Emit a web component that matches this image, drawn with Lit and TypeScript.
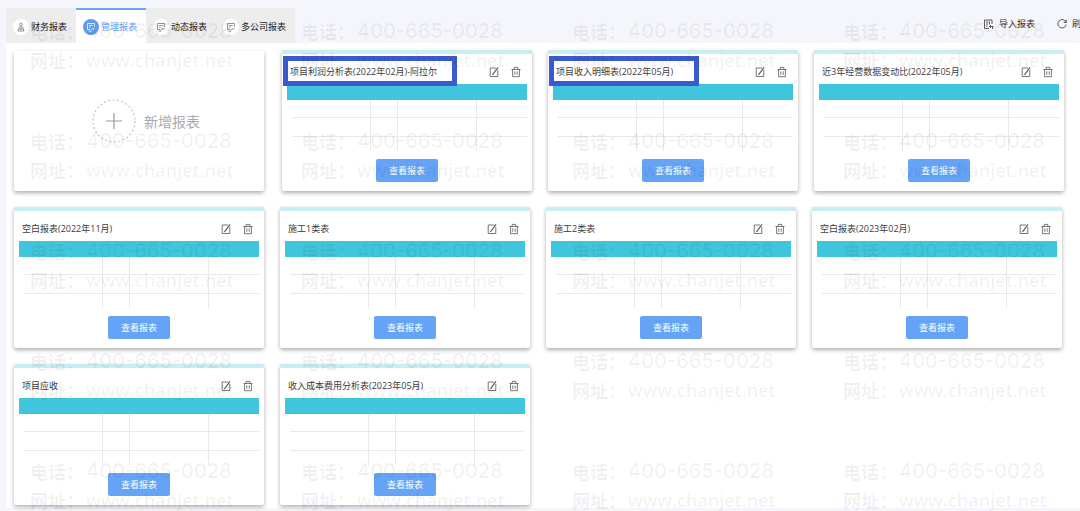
import { LitElement, html, css, svg, nothing } from "lit";
import { customElement, property, state } from "lit/decorators.js";
import { classMap } from "lit/directives/class-map.js";

interface Report {
  title: string;
  /** Width in pixels of the marker frame round the title. */
  mark?: number;
}

const REPORTS: Report[] = [
  { title: "项目利润分析表(2022年02月)-阿拉尔", mark: 174 },
  { title: "项目收入明细表(2022年05月)", mark: 150 },
  { title: "近3年经营数据变动比(2022年05月)" },
  { title: "空白报表(2022年11月)" },
  { title: "施工1类表" },
  { title: "施工2类表" },
  { title: "空白报表(2023年02月)" },
  { title: "项目应收" },
  { title: "收入成本费用分析表(2023年05月)" },
];

const TABS = ["财务报表", "管理报表", "动态报表", "多公司报表"];

const boardIcon = svg`
  <path d="M4 7.5H1.5v-6h7V5M3.2 3.5h3.6M3.2 5.2h1.6M4.6 8.6 6 6.8h2.5M2.6 9.2h2.6"/>`;
const personIcon = svg`
  <circle cx="5" cy="2.5" r="1.3"/>
  <path d="M3.6 4.5 2 9h6L6.4 4.5M5 4v4M3.5 7h3"/>`;

@customElement("report-card")
export class ReportCard extends LitElement {
  @property({ attribute: false }) report!: Report;

  static styles = css`
    :host {
      display: block;
      box-sizing: border-box;
      background: #fff;
      border-top: 4px solid #c8edf2;
      border-radius: 2px;
      box-shadow: 0 2px 4px rgba(0, 0, 0, 0.32);
    }
    .head {
      display: flex;
      align-items: center;
      gap: 12px;
      height: 30px;
      padding: 6px 11px 0 8px;
      box-sizing: border-box;
    }
    .title {
      position: relative;
      flex: 1;
      margin: 0;
      font-size: 9px;
      font-weight: 400;
      line-height: 12px;
      color: #3c3c3c;
      white-space: nowrap;
    }
    .mark {
      position: absolute;
      top: -10px;
      left: -7px;
      height: 30px;
      box-sizing: border-box;
      border: 5px solid #3a5acd;
      pointer-events: none;
    }
    .tool {
      display: block;
      width: 10px;
      height: 12px;
      padding: 0;
      border: 0;
      background: none;
      color: #555;
      cursor: pointer;
    }
    .tool svg {
      display: block;
      fill: none;
      stroke: currentColor;
      stroke-width: 0.8;
    }
    .band {
      height: 16px;
      margin: 0 5px;
      background: #40c6dc;
    }
    .lines {
      display: block;
      width: calc(100% - 15px);
      height: 51px;
      margin: 0 5px 0 10px;
      stroke: #e9e9e9;
    }
    .foot {
      display: flex;
      justify-content: center;
      padding: 8px 0 9px;
    }
    .view {
      width: 62px;
      height: 23px;
      padding: 0;
      border: 0;
      border-radius: 2px;
      background: #65a3f6;
      color: #fff;
      font: inherit;
      font-size: 9px;
      line-height: 23px;
      cursor: pointer;
    }
  `;

  render() {
    const { title, mark } = this.report;
    return html`
      <div class="head">
        <h2 class="title">
          ${title}${mark
            ? html`<span class="mark" style="width:${mark}px"></span>`
            : nothing}
        </h2>
        <button class="tool" aria-label="编辑">
          <svg width="10" height="12" viewBox="0 0 10 12">
            <path d="M7 2H1.2v8.5h7.6V4" />
            <path d="M9 1.4 3.4 9" stroke-width="1.2" />
          </svg>
        </button>
        <button class="tool" aria-label="删除">
          <svg width="10" height="12" viewBox="0 0 10 12">
            <path d="M.5 3.5h9M3.2 3.3V1.4h3.6v1.9M1.6 3.5v7.2h6.8V3.5M3.8 5.4v3.4M6.2 5.4v3.4" />
          </svg>
        </button>
      </div>
      <div class="band"></div>
      <svg class="lines" aria-hidden="true" shape-rendering="crispEdges">
        <line x1="0" y1="17.5" x2="100%" y2="17.5" />
        <line x1="0" y1="36.5" x2="100%" y2="36.5" />
        <line x1="33.6%" y1="0" x2="33.6%" y2="51" />
        <line x1="44.7%" y1="0" x2="44.7%" y2="51" />
        <line x1="78.7%" y1="0" x2="78.7%" y2="51" />
      </svg>
      <div class="foot"><button class="view">查看报表</button></div>
    `;
  }
}

@customElement("page-watermark")
export class PageWatermark extends LitElement {
  static styles = css`
    :host {
      display: grid;
      grid-template-columns: repeat(4, 271px);
      grid-auto-rows: 110px;
      color: rgba(0, 0, 0, 0.06);
    }
    .line {
      display: flex;
      align-items: center;
      height: 29px;
      white-space: nowrap;
    }
    .label {
      width: 56px;
      font-size: 18px;
      font-weight: 700;
    }
    .phone {
      font: 500 20px "Inter", sans-serif;
    }
    .site {
      font: 600 18px "Open Sans", sans-serif;
    }
  `;

  render() {
    return Array.from(
      { length: 20 },
      () => html`
        <div>
          <div class="line"><span class="label">电话：</span><span class="phone">400-665-0028</span></div>
          <div class="line"><span class="label">网址：</span><span class="site">www.chanjet.net</span></div>
        </div>
      `
    );
  }
}

@customElement("app-root")
export class AppRoot extends LitElement {
  @state() private active = 1;

  static styles = css`
    :host {
      display: block;
      position: relative;
      min-height: 100vh;
      overflow: hidden;
      background: #f5f6fb;
      font-family: "Open Sans", "Noto Sans CJK SC", sans-serif;
    }
    .header {
      display: flex;
      justify-content: space-between;
      height: 43px;
      padding-left: 6px;
      box-sizing: border-box;
    }
    .tabs {
      display: flex;
      margin-top: 8px;
    }
    .tab {
      display: flex;
      align-items: center;
      gap: 2px;
      padding: 0 9px 0 7px;
      border: 0;
      border-top: 2px solid #ededed;
      background: #ededed;
      color: #222;
      font: inherit;
      font-size: 9px;
      line-height: 12px;
      cursor: pointer;
    }
    .tab.active {
      border-top-color: #6ea6f0;
      background: #fff;
      color: #5f9cf0;
    }
    .dot {
      display: grid;
      place-items: center;
      width: 16px;
      height: 16px;
      border-radius: 50%;
      background: #fff;
      color: #777;
    }
    .active .dot {
      background: #5f9cf0;
      color: #fff;
    }
    svg {
      fill: none;
      stroke: currentColor;
      stroke-width: 0.8;
    }
    .actions {
      display: flex;
      align-items: center;
      gap: 22px;
      height: 48px;
      margin-right: -10px;
    }
    .action {
      display: flex;
      align-items: center;
      gap: 5px;
      padding: 0;
      border: 0;
      background: none;
      color: #333;
      font: inherit;
      font-size: 9px;
      line-height: 12px;
      white-space: nowrap;
      cursor: pointer;
    }
    .cards {
      display: flex;
      flex-wrap: wrap;
      gap: 16px;
      margin-left: 6px;
      padding: 7px 8px 3px;
      background: #fff;
    }
    .card {
      width: 250px;
    }
    .add {
      display: flex;
      align-items: center;
      justify-content: center;
      gap: 8px;
      width: 250px;
      margin: 1px 2px 0 0;
      padding: 0 0 0 14px;
      border: 0;
      border-radius: 2px;
      background: #fff;
      box-shadow: 0 2px 4px rgba(0, 0, 0, 0.32);
      color: #aaa;
      font: inherit;
      font-size: 14px;
      cursor: pointer;
    }
    .watermark {
      position: absolute;
      top: 16px;
      left: 30px;
      font-family: "Noto Sans CJK SC", sans-serif;
      pointer-events: none;
    }
  `;

  render() {
    return html`
      <header class="header">
        <nav class="tabs" role="tablist">
          ${TABS.map(
            (name, i) => html`
              <button
                role="tab"
                aria-selected=${i === this.active}
                class=${classMap({ tab: true, active: i === this.active })}
                @click=${() => (this.active = i)}
              >
                <span class="dot"
                  ><svg width="10" height="10" viewBox="0 0 10 10">
                    ${i === 0 ? personIcon : boardIcon}
                  </svg></span
                >
                <span>${name}</span>
              </button>
            `
          )}
        </nav>
        <div class="actions">
          <button class="action">
            <svg width="11" height="11" viewBox="0 0 11 11">
              <path d="M9 5V1H1.5v8.5H6M3 3h2.5M3 5h2M3 7h1.5M6.5 2.5v3M10.5 7.5h-4M8 6 6.5 7.5 8 9M9.5 8v2" />
            </svg>
            导入报表
          </button>
          <button class="action">
            <svg width="10" height="10" viewBox="0 0 10 10">
              <path d="M9 3.2A4.2 4.2 0 1 0 9.2 5.6M9.3.8v2.6H6.8" />
            </svg>
            刷新
          </button>
        </div>
      </header>
      <main class="cards">
        <button class="add">
          <svg width="44" height="44" viewBox="0 0 44 44">
            <circle cx="22" cy="22" r="21" stroke="#c8c8c8" stroke-width="1.2" stroke-dasharray="2.2 2.2" />
            <path d="M22 14v16M14 22h16" stroke="#999" stroke-width="1.2" />
          </svg>
          新增报表
        </button>
        ${REPORTS.map((r) => html`<report-card class="card" .report=${r}></report-card>`)}
      </main>
      <page-watermark class="watermark" aria-hidden="true"></page-watermark>
    `;
  }
}
